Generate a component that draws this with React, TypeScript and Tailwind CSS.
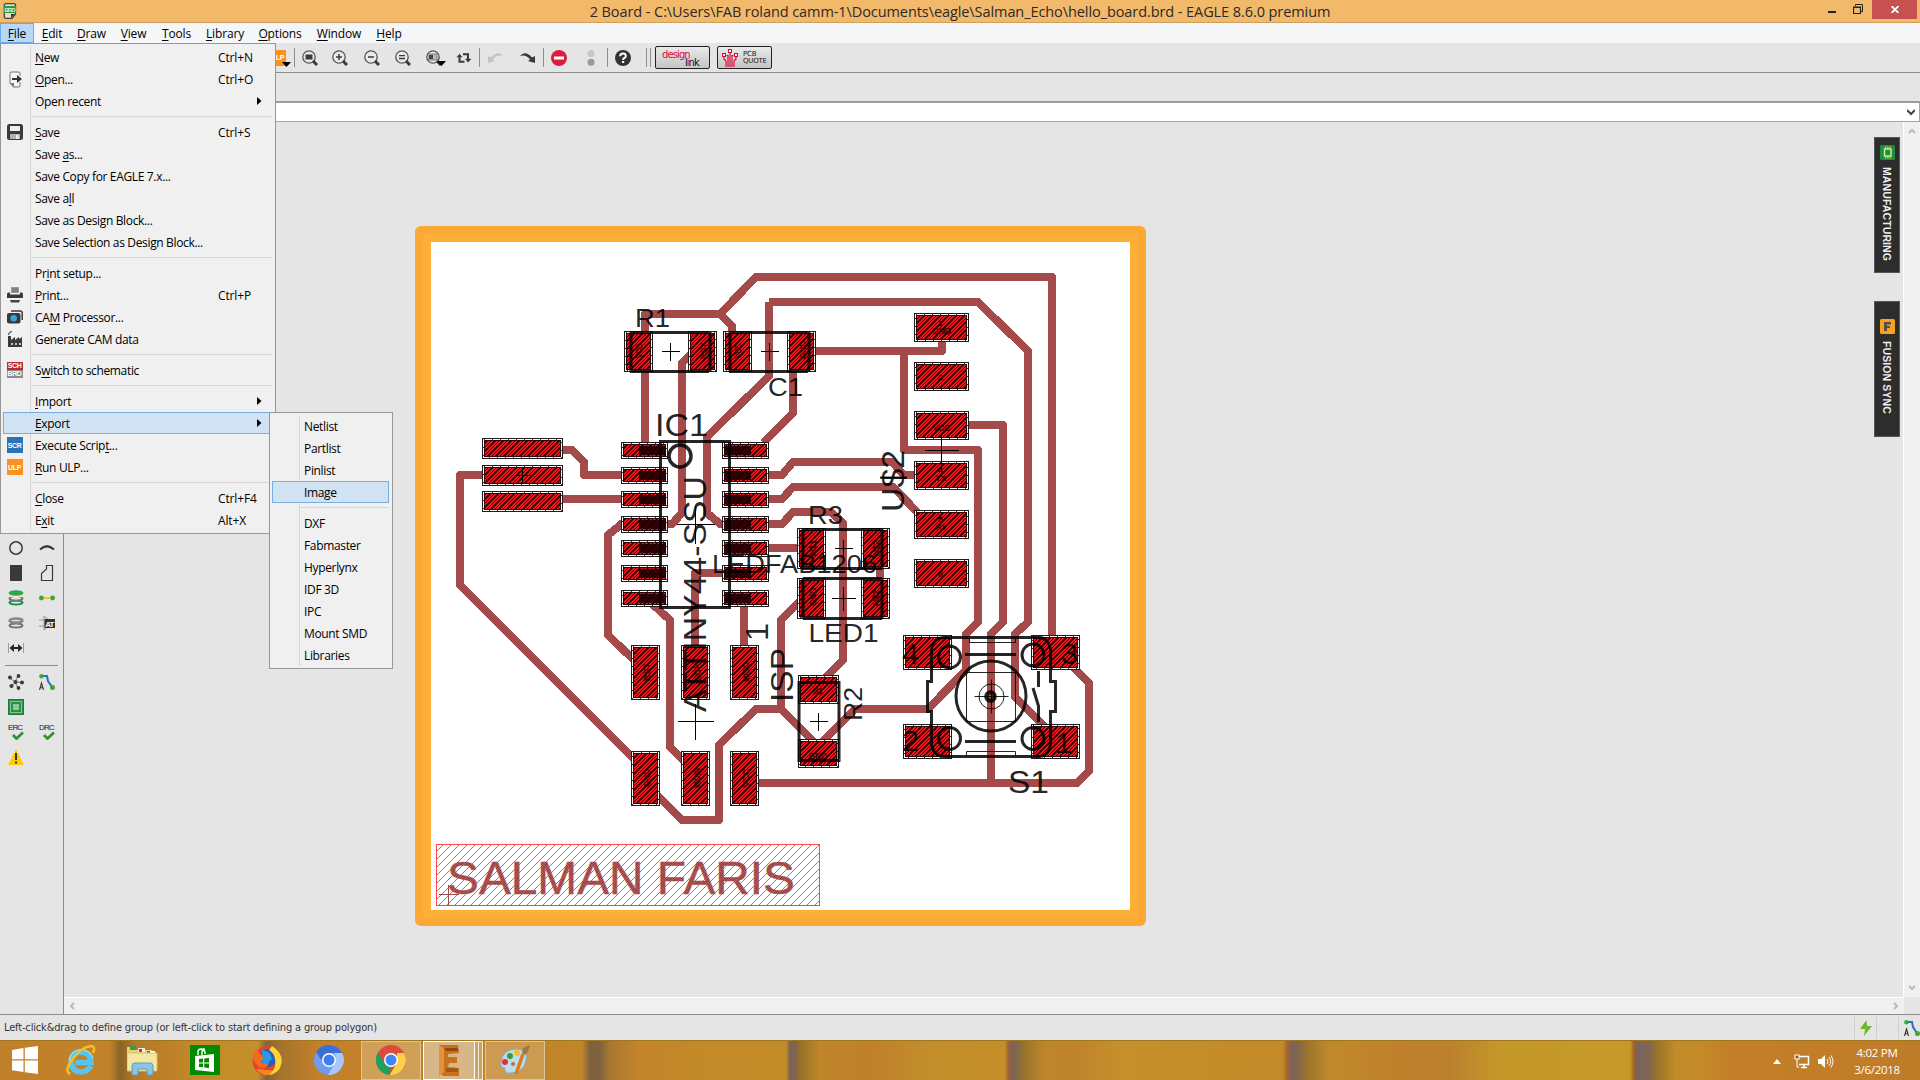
import React from 'react';

const UI = "font-['Open_Sans','Noto_Sans',sans-serif]";

type Entry = { label: string; u?: number; key?: string; sub?: boolean; icon?: React.ReactNode; hot?: boolean } | null;

function Label({ text, u }: { text: string; u?: number }) {
  if (u === undefined) return <span>{text}</span>;
  return (
    <span>
      {text.slice(0, u)}
      <span className="underline underline-offset-2">{text[u]}</span>
      {text.slice(u + 1)}
    </span>
  );
}

function Tag({ children, className }: { children: React.ReactNode; className: string }) {
  return (
    <span className={"flex h-4 w-4 items-center justify-center font-['Liberation_Sans',sans-serif] text-[7px] leading-none font-bold tracking-tighter " + className}>
      {children}
    </span>
  );
}

const openIcon = (
  <svg width="16" height="17" viewBox="0 0 16 17">
    <path d="M13 5V3Q13 1 11 1H5Q3 1 3 3V9L3 12L7 16H11Q13 16 13 14V11" fill="#f6f6f6" stroke="#999" strokeWidth="1.4" />
    <path d="M3 12H7V16Z" fill="#777" />
    <path d="M5 7H10V4L15 8L10 12V9H5Z" fill="#333" />
  </svg>
);
const saveIcon = (
  <svg width="16" height="16" viewBox="0 0 16 16">
    <rect width="16" height="16" rx="2.5" fill="#3a3a3a" />
    <rect x="3" y="2" width="10" height="5" fill="#f0f0f0" />
    <rect x="3" y="10" width="10" height="5" fill="#b0b0b0" />
    <rect x="9" y="11" width="2.5" height="4" fill="#f0f0f0" />
  </svg>
);
const printIcon = (
  <svg width="16" height="16" viewBox="0 0 16 16">
    <rect x="4" y="0" width="8" height="6" fill="#999" />
    <path d="M5 2H11M5 4H11" stroke="#666" />
    <path d="M0 7Q0 5.5 1.5 5.5H3V7.5H13V5.5H14.500Q16 5.500 16 7V11H0Z" fill="#3a3a3a" />
    <path d="M3 13H13L12 15.500H4Z" fill="#444" />
  </svg>
);
const camIcon = (
  <svg width="16" height="14" viewBox="0 0 16 14">
    <path d="M4 1H13Q15.200 1 15.200 3V10" fill="none" stroke="#3a3a3a" strokeWidth="1.5" />
    <rect x="0" y="3" width="13.500" height="10.500" rx="2" fill="#3a3a3a" />
    <circle cx="6.700" cy="8.200" r="3.300" fill="#35a3e4" />
  </svg>
);
const factoryIcon = (
  <svg width="16" height="16" viewBox="0 0 16 16">
    <path d="M1 16V5H4V9L8 6V9L12 6V8L15 6V16Z" fill="#3a3a3a" />
    <path d="M1.500 4Q2 1 5 .700" stroke="#666" strokeWidth="1.300" fill="none" />
    <path d="M4 13H6M8 13H10M12 13H14" stroke="#eee" strokeWidth="1.500" />
  </svg>
);
const schIcon = (
  <span className="flex h-4 w-4 flex-col font-['Liberation_Sans',sans-serif] text-[7px] leading-[8px] font-bold tracking-tighter text-white">
    <span className="h-2 bg-[#c1272d] text-center">SCH</span>
    <span className="h-2 bg-[#8c8c8c] text-center">BRD</span>
  </span>
);

const fileMenu: Entry[] = [
  { label: 'New', u: 0, key: 'Ctrl+N' },
  { label: 'Open...', u: 0, key: 'Ctrl+O', icon: openIcon },
  { label: 'Open recent', sub: true },
  null,
  { label: 'Save', u: 0, key: 'Ctrl+S', icon: saveIcon },
  { label: 'Save as...', u: 5 },
  { label: 'Save Copy for EAGLE 7.x...' },
  { label: 'Save all', u: 6 },
  { label: 'Save as Design Block...' },
  { label: 'Save Selection as Design Block...' },
  null,
  { label: 'Print setup...', u: 2 },
  { label: 'Print...', u: 0, key: 'Ctrl+P', icon: printIcon },
  { label: 'CAM Processor...', u: 2, icon: camIcon },
  { label: 'Generate CAM data', icon: factoryIcon },
  null,
  { label: 'Switch to schematic', u: 1, icon: schIcon },
  null,
  { label: 'Import', u: 0, sub: true },
  { label: 'Export', u: 0, sub: true, hot: true },
  { label: 'Execute Script...', u: 13, icon: <Tag className="bg-[#2a72bb] text-white">SCR</Tag> },
  { label: 'Run ULP...', u: 0, icon: <Tag className="bg-[#f7931e] text-white">ULP</Tag> },
  null,
  { label: 'Close', u: 0, key: 'Ctrl+F4' },
  { label: 'Exit', u: 1, key: 'Alt+X' },
];

const exportMenu: Entry[] = [
  { label: 'Netlist' }, { label: 'Partlist' }, { label: 'Pinlist' }, { label: 'Image', hot: true }, null,
  { label: 'DXF' }, { label: 'Fabmaster' }, { label: 'Hyperlynx' }, { label: 'IDF 3D' }, { label: 'IPC' },
  { label: 'Mount SMD' }, { label: 'Libraries' },
];

function Menu({ items, className }: { items: Entry[]; className: string }) {
  return (
    <div className={'absolute z-10 border border-[#979797] bg-[#f0f0f0] py-[2px] pr-[3px] pl-[2px] text-[12px] text-black ' + className}>
      <div className="absolute top-[2px] bottom-[2px] left-[29px] w-px bg-[#d7d7d7]" />
      {items.map((it, i) =>
        it === null ? (
          <div key={i} className="h-[9px] pt-1 pl-[27px]"><div className="h-px bg-[#d7d7d7]" /></div>
        ) : (
          <div key={i} className={'relative flex h-[22px] items-center border ' + (it.hot ? 'border-[#78aee5] bg-[#d1e2f2]' : 'border-transparent')}>
            <span className="flex w-[21px] shrink-0 justify-center">{it.icon}</span>
            <span className="ml-[10px] flex-1 pt-[2px] tracking-[-0.34px] whitespace-nowrap"><Label text={it.label} u={it.u} /></span>
            {it.key && <span className="w-[53px] pt-[2px] tracking-[-0.15px]">{it.key}</span>}
            {it.sub && (
              <svg className="mr-[9px]" width="5" height="8" viewBox="0 0 5 8"><path d="M0 0L4.500 4L0 8Z" fill="#000" /></svg>
            )}
          </div>
        ),
      )}
    </div>
  );
}

function Lens({ children }: { children: React.ReactNode }) {
  return (
    <svg width="16" height="16" viewBox="0 0 16 16">
      <circle cx="7" cy="7" r="6.200" fill="#e9e9e9" stroke="#555" strokeWidth="1.300" />
      <path d="M11 11L15 15" stroke="#3a3a3a" strokeWidth="3" />
      {children}
    </svg>
  );
}

const Cell = ({ children, className = 'w-[31px]' }: { children: React.ReactNode; className?: string }) => (
  <span className={'relative flex h-[29px] shrink-0 items-center justify-center ' + className}>{children}</span>
);
const Caret = () => (
  <svg className="absolute top-[18px] left-[19px]" width="9" height="5" viewBox="0 0 9 5"><path d="M0 0H9L4.500 5Z" fill="#000" /></svg>
);
const Sep = ({ className = '' }: { className?: string }) => <span className={'h-[19px] w-px shrink-0 bg-[#8e8e8e] ' + className} />;

function Toolbar() {
  return (
    <div className="flex h-[30px] items-center border-b border-[#8c8c8c] bg-[#e5e5e5]">
      <Cell className="ml-[262px] w-[31px]">
        <Tag className="bg-[#f7931e] text-white">ULP</Tag>
        <svg className="absolute top-[19px] left-[20px]" width="9" height="5" viewBox="0 0 9 5"><path d="M0 0H9L4.500 5Z" fill="#000" /></svg>
      </Cell>
      <Sep className="ml-px" />
      <Cell className="w-[29px]"><Lens><rect x="3.500" y="4.500" width="7" height="5" fill="#3a3a3a" /></Lens></Cell>
      <Cell className="w-[32px]"><Lens><path d="M4 7H10M7 4V10" stroke="#3a3a3a" strokeWidth="1.500" /></Lens></Cell>
      <Cell><Lens><path d="M4 7H10" stroke="#3a3a3a" strokeWidth="1.500" /></Lens></Cell>
      <Cell><Lens><path d="M4 5.700H10M4 8.500H10" stroke="#3a3a3a" strokeWidth="1.300" /></Lens></Cell>
      <Cell><Lens><rect x="3" y="4" width="8" height="6" fill="#bbb" stroke="#777" /><rect x="3" y="5" width="4" height="4" fill="#444" /></Lens><Caret /></Cell>
      <Cell className="w-[30px]">
        <svg width="16" height="14" viewBox="0 0 16 14">
          <path d="M3.500 5V10.800H8.500M12 8.500V3.200H7" fill="none" stroke="#3a3a3a" strokeWidth="2" />
          <path d="M.500 6.200L3.500 2.700L6.500 6.200ZM9 7.800L12 11.500L15.500 7.800Z" fill="#3a3a3a" />
        </svg>
      </Cell>
      <Sep />
      <Cell>
        <svg width="16" height="11" viewBox="0 0 16 11"><path d="M0 4L0 11L7 9L5 7.500Q9 2 15 4Q10 -2 3 5.500Z" fill="#c4c4c4" /></svg>
      </Cell>
      <Cell className="w-[32px]">
        <svg width="16" height="11" viewBox="0 0 16 11"><path d="M16 4L16 11L9 9L11 7.500Q7 2 1 4Q6 -2 13 5.500Z" fill="#3a3a3a" /></svg>
      </Cell>
      <Sep />
      <Cell className="w-[30px]">
        <svg width="16" height="16" viewBox="0 0 16 16"><circle cx="8" cy="8" r="8" fill="#dc1e3c" /><rect x="3" y="6.500" width="10" height="3" fill="#fff" /></svg>
      </Cell>
      <Cell className="w-[33px]">
        <svg width="8" height="16" viewBox="0 0 8 16"><circle cx="4" cy="3.500" r="3.500" fill="#c6c6c6" /><circle cx="4" cy="12.300" r="3.500" fill="#9a9a9a" /></svg>
      </Cell>
      <Sep className="w-[2px]" />
      <Cell className="w-[30px]">
        <svg width="16" height="16" viewBox="0 0 16 16">
          <circle cx="8" cy="8" r="8" fill="#333" />
          <path d="M5.200 6.200Q5.200 3.600 8 3.600T10.800 6Q10.800 7.400 9.300 8Q8.100 8.600 8.100 9.900" fill="none" stroke="#fff" strokeWidth="2" />
          <rect x="7" y="11" width="2.200" height="2" fill="#fff" />
        </svg>
      </Cell>
      <Sep className="ml-2" />
      <Sep className="ml-[3px]" />
      <span className="relative ml-1 h-[23px] w-[55px] rounded-[2px] border border-[#222] bg-linear-to-b from-[#e9e9e9] to-[#c6c6c6] font-['DejaVu_Sans',sans-serif] text-[10px] leading-none">
        <span className="absolute top-[3px] left-[6px] tracking-[-0.9px] text-[#dc0a3c]">design</span>
        <span className="absolute top-[11px] left-[29px] tracking-[-1px] text-[#111]"><span>l</span><span className="text-[#dc0a3c]">i</span>nk</span>
      </span>
      <span className="ml-[7px] flex h-[23px] w-[55px] items-center rounded-[2px] border border-[#222] bg-linear-to-b from-[#e9e9e9] to-[#c6c6c6]">
        <svg className="ml-[3px] shrink-0" width="18" height="19" viewBox="0 0 18 19" fill="none" stroke="#dc0a3c">
          <rect x="7.500" y="1.500" width="3" height="3" fill="#fff" /><rect x="1.500" y="5.500" width="3" height="3" fill="#fff" /><rect x="13.500" y="5.500" width="3" height="3" fill="#fff" />
          <path d="M9 4V19M3 8.500V11L5 13V19M15 8.500V11L13 13V19M7 19V7.500H5.500M11 19V7.500H12.500" strokeWidth="1.200" />
        </svg>
        <span className="ml-[4px] font-['DejaVu_Sans',sans-serif] text-[7px] leading-[7px] tracking-[-0.2px] text-[#222]">PCB<br />QUOTE</span>
      </span>
    </div>
  );
}

const traces = [
  'M645 450V314H720L756 277H1052V645', 'M720 314L732 326V345',
  'M769 302H978L1028 351V622L1015 634V697L1048 730', 'M769 302V376L707 437V513L720 524H735',
  'M692 353L682 363V513L672 524H660', 'M793 370V413L763 443',
  'M810 351H942V335', 'M904 351V450H978V622L966 634V670L928 709H855L819 745',
  'M965 425H1003V622L991 634V783', 'M560 450H572L584 462V475H625',
  'M485 475H460V585L638 763', 'M560 499H625',
  'M765 475H782L793 462H892L904 475H920', 'M765 499H782L793 487H893L920 515',
  'M765 524H782L793 512H831L843 523V660L823 680', 'M765 548H800', 'M745 573H695V650',
  'M880 560V585', 'M624 522L608 535V635L636 662', 'M650 602L670 620V747L686 763', 'M744 605V648',
  'M799 602L781 620V709L817 745', 'M781 709H756L719 745V820H682L655 793',
  'M757 783H1077L1089 771V683L1070 664',
];

type Rect = [number, number, number, number];
const pads: Rect[] = [
  [482, 438, 81, 21], [482, 465, 81, 21], [482, 491, 81, 21],
  [624, 331, 29, 41], [688, 331, 29, 41], [723, 331, 29, 41], [787, 331, 29, 41],
  ...[442, 467, 491, 516, 540, 565, 590].flatMap((y): Rect[] => [[621, y, 47, 17], [722, y, 47, 17]]),
  ...[313, 362, 411, 461, 510, 559].map((y): Rect => [914, y, 55, 29]),
  [797, 528, 29, 41], [861, 528, 29, 41], [797, 578, 29, 41], [861, 578, 29, 41],
  ...[645, 751].flatMap((y): Rect[] => [[631, y, 29, 55], [681, y, 29, 55], [730, y, 29, 55]]),
  [798, 675, 41, 29], [798, 739, 41, 29],
  [903, 635, 49, 35], [903, 724, 49, 35], [1031, 635, 49, 35], [1031, 724, 49, 35],
];

type Txt = { t: string; x: number; y: number; s: number; w: number; v?: boolean };
const names: Txt[] = [
  { t: 'R1', x: 635, y: 326.5, s: 26, w: 35 }, { t: 'C1', x: 768, y: 395.5, s: 26, w: 35 },
  { t: 'IC1', x: 655, y: 436, s: 32, w: 53 }, { t: 'R3', x: 808, y: 523.5, s: 26, w: 35 },
  { t: 'LEDFAB1206', x: 712, y: 573, s: 26, w: 165 }, { t: 'LED1', x: 808.5, y: 641.5, s: 26, w: 70 },
  { t: 'S1', x: 1008, y: 793, s: 32, w: 41 }, { t: 'U$2', x: 904, y: 512, s: 32, w: 62, v: true },
  { t: 'R2', x: 862, y: 721, s: 26, w: 34, v: true }, { t: 'ISP', x: 793, y: 702, s: 32, w: 54, v: true },
  { t: '1', x: 768, y: 641, s: 32, w: 18, v: true }, { t: 'ATTINY44-SSU', x: 706, y: 712, s: 32, w: 236, v: true },
  { t: '4', x: 902, y: 664, s: 29, w: 17 }, { t: '3', x: 1061, y: 664, s: 29, w: 17 },
  { t: '2', x: 902, y: 751, s: 29, w: 17 }, { t: '1', x: 1055, y: 753, s: 29, w: 17 },
];
const signals: Txt[] = [
  { t: '1', x: 938, y: 326, s: 8, w: 5 }, { t: 'GND', x: 932, y: 334, s: 9, w: 19 }, { t: '2', x: 938, y: 380, s: 8, w: 5 },
  { t: 'VCC', x: 933, y: 431, s: 9, w: 17 }, { t: '4', x: 938, y: 473, s: 8, w: 5 }, { t: 'TX', x: 936, y: 481, s: 8, w: 10 },
  { t: '5', x: 938, y: 522, s: 8, w: 5 }, { t: 'RX', x: 936, y: 530, s: 8, w: 10 }, { t: '6', x: 938, y: 577, s: 9, w: 5 },
  { t: 'RST', x: 650, y: 681, s: 9, w: 18, v: true }, { t: 'SCK', x: 700, y: 681, s: 9, w: 18, v: true }, { t: 'MISO', x: 749, y: 682, s: 9, w: 20, v: true },
  { t: 'GND', x: 650, y: 787, s: 9, w: 18, v: true }, { t: 'MOSI', x: 700, y: 788, s: 9, w: 20, v: true }, { t: 'VCC', x: 749, y: 787, s: 9, w: 18, v: true },
  { t: 'VCC', x: 642, y: 358, s: 9, w: 14, v: true }, { t: 'RST', x: 707, y: 359, s: 9, w: 16, v: true }, { t: 'VCC', x: 741, y: 358, s: 9, w: 14, v: true },
  { t: 'GND', x: 806, y: 359, s: 9, w: 18, v: true }, { t: 'N$1', x: 816, y: 556, s: 9, w: 16, v: true }, { t: 'N$2', x: 879, y: 556, s: 9, w: 16, v: true },
  { t: 'GND', x: 816, y: 606, s: 9, w: 18, v: true }, { t: 'N$2', x: 879, y: 606, s: 9, w: 16, v: true }, { t: 'B1', x: 813, y: 694, s: 9, w: 10 }, { t: 'GND', x: 809, y: 759, s: 9, w: 18 },
];

function BoardText({ t, x, y, s, w, v }: Txt) {
  return (
    <text x={x} y={y} fontSize={s} textLength={w} lengthAdjust="spacingAndGlyphs" transform={v ? `rotate(-90 ${x} ${y})` : undefined}>{t}</text>
  );
}

const plus = (x: number, y: number, r: number, q = r) => `M${x - r} ${y}H${x + r}M${x} ${y - q}V${y + q}`;

function Board() {
  return (
    <svg className="block font-['Liberation_Sans',sans-serif]" width="732" height="701" viewBox="415 226 732 701">
      <defs>
        <pattern id="hatch" width="8" height="8" patternUnits="userSpaceOnUse">
          <rect width="8" height="8" fill="#f3171b" />
          <g stroke="#2c0408" shapeRendering="geometricPrecision">
            <path d="M-1 5L5 -1M3 9L9 3" strokeWidth="1" />
            <path d="M-1 9L9 -1M-1 1L1 -1M7 9L9 7" strokeWidth="1.800" />
          </g>
        </pattern>
        <pattern id="keepout" width="8" height="8" patternUnits="userSpaceOnUse">
          <path d="M-1 9L9 -1M-1 1L1 -1M7 9L9 7" stroke="#ff3a3e" strokeWidth=".9" shapeRendering="geometricPrecision" />
        </pattern>
      </defs>
      <rect x="415" y="226" width="731" height="700" rx="6" fill="#fba834" />
      <rect x="423" y="234" width="715" height="684" fill="#ffae38" />
      <rect x="431" y="242" width="699" height="668" fill="#fff" />

      <g fill="none" stroke="#a54a4a" strokeWidth="8" strokeLinejoin="round" shapeRendering="crispEdges">
        {traces.map((d) => <path key={d} d={d} />)}
      </g>

      <g shapeRendering="crispEdges">
        {pads.map(([x, y, w, h], i) => (
          <g key={i}>
            <rect x={x + 0.5} y={y + 0.5} width={w - 1} height={h - 1} fill="#fff" stroke="#1c1c1c" />
            <rect x={x + 1.500} y={y + 1.500} width={w - 3} height={h - 3} fill="none" stroke="#333" strokeDasharray="1 7" />
            <rect x={x + 2} y={y + 2} width={w - 4} height={h - 4} fill="#2c0408" />
            <rect x={x + 3} y={y + 3} width={w - 6} height={h - 6} fill="url(#hatch)" />
          </g>
        ))}
        {[442, 467, 491, 516, 540, 565, 590].map((y) => (
          <g key={y} fill="#1a0003" fillOpacity=".88">
            <rect x="639" y={y + 4} width="27" height="9" /><rect x="725" y={y + 4} width="26" height="9" />
          </g>
        ))}
      </g>

      <g fill="none" stroke="#000" strokeOpacity=".85" strokeWidth="3">
        <path d="M630 332.500H709M630 371.500H709M631 332V372M710 332V372M729 332.500H808M729 371.500H808M730 332V372M809 332V372" />
        <path d="M660.500 441.500H729.500V607.500H660.500Z" />
        <circle cx="680" cy="456" r="11" strokeWidth="3.500" />
        <path d="M803 529.500H882M803 568.500H882M803 529V569M882 529V569M803 578.500H882M803 618.500H882M803 578V619M882 578V619" />
        <path d="M799 682.500H839V760.500H799Z" />
      </g>

      <g fill="none" stroke="#000" strokeOpacity=".85" strokeWidth="3">
        <path d="M943 637.500H1040M943 756.500H1040M931.500 649Q934 638 943 637.500M1050.500 649Q1048 638 1040 637.500M931.500 745Q934 756 943 756.500M1050.500 745Q1048 756 1040 756.500M931.500 649V681.500H927.500V711.500H931.500V745M1050.500 649V681.500H1055.500V711.500H1050.500V745" />
        <path d="M965 654.500H1016M965 741.500H1016M1038.500 671V687M1033 688L1038.500 706V722" />
        <circle cx="991" cy="696" r="35" />
        <circle cx="949.500" cy="657" r="11" /><circle cx="949.500" cy="738.500" r="11" />
        <circle cx="1033" cy="655" r="11" /><circle cx="1033" cy="738.500" r="11" />
        <circle cx="990.500" cy="696.500" r="4.300" strokeWidth="4" />
        <g strokeWidth="1">
          <rect x="966.500" y="672.500" width="49" height="49" /><path d="M969.500 638V642.500H1015.500V638M966.500 756V751.500H1015.500V756" />
          <circle cx="991.500" cy="696.500" r="12.500" /><path d={plus(991.500, 696.500, 17)} />
        </g>
      </g>

      <path d={[plus(670.5, 351.5, 9), plus(769.5, 351.5, 9), plus(522.5, 475.5, 8), plus(695.5, 524.5, 19), plus(941.5, 450.5, 17), plus(843.5, 548.5, 9), plus(843.5, 598.5, 12), plus(695.5, 721.5, 18), plus(818.5, 721.5, 9)].join('')} stroke="#000" fill="none" shapeRendering="crispEdges" />

      <g fill="#000" fillOpacity=".87">{names.map((n, i) => <BoardText key={i} {...n} />)}</g>
      <path d="M880 477.500H907" stroke="#000" strokeOpacity=".85" strokeWidth="2" />
      <g fill="#300" fillOpacity=".9" stroke="#300" strokeWidth=".4">{signals.map((n, i) => <BoardText key={i} {...n} />)}</g>

      <g fill="#a54a4a" stroke="#a54a4a" strokeWidth=".5"><BoardText t="SALMAN FARIS" x={447} y={894} s={47} w={348} /></g>
      <rect x="436.500" y="844.500" width="383" height="61" fill="url(#keepout)" stroke="#ff4548" shapeRendering="crispEdges" />
      <path d={plus(448.5, 894.5, 10)} stroke="#a54a4a" shapeRendering="crispEdges" />
    </svg>
  );
}

const autoRoute = (
  <svg width="16" height="16" viewBox="0 0 16 16">
    <path d="M3 2H8L9 7L13 13" fill="none" stroke="#2a72bb" strokeWidth="2" />
    <circle cx="2.500" cy="2.300" r="2.300" fill="#3aaa35" /><circle cx="13.500" cy="13.500" r="2.500" fill="#3aaa35" />
    <path d="M.500 16L2.500 9L4.500 16M1 13.800H4" fill="none" stroke="#333" strokeWidth="1.100" />
  </svg>
);
function Rule({ label }: { label: string }) {
  return (
    <span className="flex h-4 w-4 flex-col font-['Liberation_Sans',sans-serif] text-[8px] leading-[7px] tracking-[-0.9px] text-[#222]">
      {label}
      <svg className="ml-[4px]" width="12" height="9" viewBox="0 0 12 9"><path d="M1 4L4.500 7.500L11 1.500" fill="none" stroke="#2f9336" strokeWidth="2.800" /></svg>
    </span>
  );
}
const disc = (cy: number, c: string) => <ellipse cx="8" cy={cy} rx="6.500" ry="2" fill="#e5e5e5" stroke={c} strokeWidth="2" />;

const tools: React.ReactNode[] = [
  <svg key="c" width="16" height="16" viewBox="0 0 16 16"><circle cx="8" cy="8" r="6.200" fill="none" stroke="#3a3a3a" strokeWidth="1.500" /></svg>,
  <svg key="a" width="16" height="16" viewBox="0 0 16 16"><path d="M1 9.500Q8 3 15 9.500" fill="none" stroke="#3a3a3a" strokeWidth="2.200" /></svg>,
  <svg key="r" width="16" height="16" viewBox="0 0 16 16"><rect x="2" width="12" height="16" fill="#3a3a3a" /></svg>,
  <svg key="p" width="16" height="16" viewBox="0 0 16 16"><path d="M2.500 15.500H13.500V.500H7.500V4L2.500 8.500Z" fill="none" stroke="#3a3a3a" strokeWidth="1.200" /></svg>,
  <svg key="v" width="16" height="16" viewBox="0 0 16 16">{disc(12.500, '#119a45')}{disc(8.500, '#777')}<ellipse cx="8" cy="5.500" rx="7.500" ry="2.400" fill="#e5e5e5" /><ellipse cx="8" cy="3" rx="7.500" ry="2.800" fill="#2fa83d" /></svg>,
  <svg key="s" width="16" height="16" viewBox="0 0 16 16"><path d="M3 8H13" stroke="#f7c600" strokeWidth="1.800" /><circle cx="2.400" cy="8" r="2.400" fill="#3aaa35" /><circle cx="13.600" cy="8" r="2.400" fill="#3aaa35" /></svg>,
  <svg key="h" width="16" height="16" viewBox="0 0 16 16">{disc(10.500, '#777')}<ellipse cx="8" cy="5.500" rx="6.500" ry="2" fill="#e5e5e5" stroke="#888" strokeWidth="2.400" /></svg>,
  <svg key="t" width="16" height="16" viewBox="0 0 16 16"><path d="M0 5H6M0 11H6M5 1V15Q10 12 11 8Q10 4 5 1" fill="none" stroke="#999" /><rect x="5.500" y="4" width="10.500" height="9" fill="#333" /><text x="6.300" y="11.500" fontSize="8" fontWeight="bold" fill="#fff" fontFamily="Liberation Sans" textLength="9">AT</text></svg>,
  <svg key="d" width="16" height="16" viewBox="0 0 16 16"><path d="M.500 3V13M15.500 3V13" stroke="#999" /><path d="M3 8H13" stroke="#222" strokeWidth="2" /><path d="M1.500 8L6 4V12ZM14.500 8L10 4V12Z" fill="#222" /></svg>,
  null,
];
const tools2: React.ReactNode[] = [
  <svg key="n" width="16" height="16" viewBox="0 0 16 16" fill="#3a3a3a"><path d="M7 8L2 4M7 8L10 2M7 8L14 8.500M7 8L4 12M7 8L10 14" stroke="#777" /><circle cx="7.500" cy="8" r="2" /><circle cx="2" cy="3.500" r="2" /><circle cx="10.500" cy="2" r="1.900" /><circle cx="14" cy="8.500" r="2" /><circle cx="3.500" cy="12" r="2" /><circle cx="10.500" cy="14" r="1.900" /></svg>,
  <React.Fragment key="ar">{autoRoute}</React.Fragment>,
  <svg key="b" width="16" height="16" viewBox="0 0 16 16"><rect x=".500" y=".500" width="15" height="15" fill="#2c9048" stroke="#1f7d3a" /><rect x="2.500" y="2.500" width="11" height="11" fill="none" stroke="#e5f0e5" strokeDasharray="1 1" /><rect x="5" y="5" width="6" height="6" fill="#8cc89a" /></svg>,
  null,
  <Rule key="e" label="ERC" />,
  <Rule key="dr" label="DRC" />,
  <svg key="w" width="16" height="16" viewBox="0 0 16 16"><path d="M8 0L16 16H0Z" fill="#fc0" /><path d="M8 4V11M8 12.500V14.500" stroke="#333" strokeWidth="2" /></svg>,
  null,
];

const Chev = ({ d, className = '', c = '#b9b9b9' }: { d: string; className?: string; c?: string }) => (
  <svg className={className} width="8" height="8" viewBox="0 0 8 8"><path d={d} fill="none" stroke={c} strokeWidth="2" /></svg>
);

function SideTab({ text, badge, className }: { text: string; badge: React.ReactNode; className: string }) {
  return (
    <div className={'flex h-[136px] w-[26px] flex-col items-center border border-[#555] bg-[#2d2d2d] ' + className}>
      {badge}
      <span className="mt-[7px] font-['Liberation_Sans',sans-serif] text-[10.5px] leading-[14px] font-bold tracking-[0.1px] whitespace-nowrap text-[#eee] [writing-mode:vertical-rl]">{text}</span>
    </div>
  );
}

function Taskbar() {
  return (
    <div
      className={
        'relative flex h-10 items-center overflow-hidden border-t border-[#a0761e] pb-px bg-[linear-gradient(90deg,#c0802a_0,#c0822a_110px,#8a6428_120px,#b5782a_135px,#c58a28_200px,#c4902a_258px,#84633a_266px,#a3742c_280px,#c4802a_320px,#c08628_582px,#7c6040_590px,#80633e_600px,#a87830_610px,#c4842a_640px,#c28a28_700px,#c28c28_786px,#7c6258_790px,#80644c_795px,#9a7428_802px,#c0862a_820px,#c0802c_870px,#c28e2a_930px,#c48e28_1005px,#a8642c_1008px,#7c6258_1011px,#80664e_1016px,#98742c_1024px,#be862a_1045px,#c0842c_1080px,#c5902a_1120px,#c28a28_1283px,#a8642c_1287px,#7c6258_1291px,#80664e_1297px,#9c742c_1308px,#c08a2a_1330px,#c0802c_1400px,#bb802e_1450px,#c49828_1500px,#c79a28_1630px,#a06028_1634px,#776464_1638px,#84684c_1650px,#9a7428_1658px,#c08c28_1675px,#c48a28_1700px,#c47e28_1730px,#bf7c28_1920px)]'
      }
    >
      <svg className="ml-3" width="26" height="28" viewBox="0 0 26 28" fill="#fff"><path d="M0 4L11.500 2V13.300H0ZM12.800 1.800L26 0V13.300H12.800ZM0 14.600H11.500V26L0 24.200ZM12.800 14.600H26V28L12.800 26.200Z" /></svg>
      <svg className="ml-7" width="30" height="32" viewBox="0 0 30 32">
        <path d="M25 22Q21 28 15 28Q5 27 5 17Q6 8 15 8Q25 9 25 18.500H9" fill="none" stroke="#57c4ef" strokeWidth="5.500" />
        <path d="M3 17Q5 6 15 5.500Q24 6 27 14" fill="none" stroke="#a6e2f8" strokeWidth="1.200" />
        <path d="M4 30Q-2 27 6 16Q15 3 25 2Q30 2 27 9" fill="none" stroke="#f4c020" strokeWidth="2.500" />
      </svg>
      <svg className="ml-[31px]" width="31" height="32" viewBox="0 0 31 32">
        <path d="M0 3H7L9 6H24L30 9V27H0Z" fill="#e9d27c" /><path d="M3 2H9V6H3Z" fill="#3a9c3a" /><path d="M11 4H18V8H11Z" fill="#eee" /><path d="M12 5H15V8H12Z" fill="#c33" /><path d="M21 7H28V9H21Z" fill="#fff" /><path d="M20 7H23V9H20Z" fill="#37c" />
        <rect x="0" y="9" width="30" height="18" rx="1" fill="#f5e7a3" stroke="#dcc067" />
        <path d="M5 31V22Q5 19 8 19H23Q26 19 26 22V31H20V25H11V31Z" fill="#8dc4e4" stroke="#5b9cc4" />
      </svg>
      <svg className="ml-8" width="30" height="30" viewBox="0 0 30 30">
        <rect width="30" height="30" fill="#008a00" /><path d="M8 10V7Q8 4 11 4T15 7V9M12 10V7Q12 4 15 4" fill="none" stroke="#fff" strokeWidth="1.400" />
        <path d="M5 11L24 9V27L5 25Z" fill="#fff" /><path d="M9 14L13 13.600V17.400H9ZM14.200 13.400L19 13V17.400H14.200ZM9 18.600H13V22.300L9 22ZM14.200 18.600H19V23L14.200 22.500Z" fill="#008a00" />
      </svg>
      <svg className="ml-8" width="30" height="31" viewBox="0 0 30 31">
        <circle cx="15" cy="16" r="14.500" fill="#e8432a" /><path d="M4 24Q14 36 26 24Q22 26 15 25Z" fill="#f08a1c" />
        <circle cx="16" cy="13" r="9" fill="#1f5fc0" /><path d="M10 5Q19 6 20 14L14 20Q8 17 10 12Z" fill="#2f96e0" />
        <path d="M20 1Q31 8 29.500 18Q28 28 17 30Q25 24 23 14Q22 8 17 5Z" fill="#ffd23a" />
        <path d="M1 9L4 5L8 8L11 12L9 17Q12 20 17 18Q14 25 7 22Q1 18 1 9Z" fill="#f7691e" />
      </svg>
      <svg className="ml-8" width="30" height="30" viewBox="0 0 30 30">
        <circle cx="15" cy="15" r="15" fill="#6f9cf0" /><path d="M2 7A15 15 0 0 1 28 8H15Q9 8 8 16Z" fill="#3b6fd6" /><path d="M28 8A15 15 0 0 1 14 30L21 18Q23 12 20 8Z" fill="#a9c8fa" />
        <circle cx="15" cy="15" r="7" fill="#fff" /><circle cx="15" cy="15" r="5.500" fill="#3f7ef0" />
      </svg>
      <div className="ml-[17px] flex h-[39px] w-[60px] items-center justify-center border border-[#dcc49a] bg-[#d5ac6c]/70">
        <svg width="30" height="30" viewBox="0 0 30 30">
          <circle cx="15" cy="15" r="15" fill="#dd4b3e" /><path d="M2 7.500L9 19L15 22L13.500 30A15 15 0 0 1 2 7.500Z" fill="#1fa15d" /><path d="M28 8A15 15 0 0 1 13.500 30L21 18V8Z" fill="#fdd04b" />
          <circle cx="15" cy="15" r="7" fill="#fff" /><circle cx="15" cy="15" r="5.500" fill="#4285f4" />
        </svg>
      </div>
      <div className="ml-[2px] flex h-[39px] w-[60px]">
        <div className="flex w-[52px] items-center justify-center border border-[#fff] bg-[#dcc3a0]/80">
          <svg width="22" height="31" viewBox="0 0 22 31"><path d="M1 0H20L21 8L10 9V12H19V18H11L10 22L21 23V31H5L1 27L3 17Z" fill="#c9701c" /><path d="M1 0L6 3V27L1 31Z" fill="#e3923a" /><path d="M6 3H20V6H8Z" fill="#8e4a10" /><path d="M8 23H20V27H8Z" fill="#a65812" /></svg>
        </div>
        <div className="w-1 border border-l-0 border-[#f4e8d4] bg-[#cba566]" />
        <div className="w-1 border border-l-0 border-[#f4e8d4] bg-[#cba566]" />
      </div>
      <div className="ml-[2px] flex h-[39px] w-[60px] items-center justify-center border border-[#dcc49a] bg-[#d0a462]/70">
        <svg width="32" height="32" viewBox="0 0 32 32">
          <path d="M2 18Q4 5 18 5Q30 6 27 16Q25 28 12 29Q5 30 6 24Q1 24 2 18Z" fill="#bcdcee" stroke="#7fb0ce" />
          <circle cx="6" cy="18" r="3" fill="#d33" /><circle cx="11" cy="12" r="3" fill="#3a9c3a" /><circle cx="18" cy="9" r="3" fill="#f4c020" /><circle cx="14" cy="20" r="2" fill="#b07a30" />
          <path d="M17 30L24 10" stroke="#e07a1c" strokeWidth="3.500" /><path d="M23 9L24 4L31 1L29 8L26 11Z" fill="#a8763c" />
        </svg>
      </div>
      <div className="mr-[19px] ml-auto flex items-center pt-[2px] text-white">
        <svg className="mr-3" width="8" height="5" viewBox="0 0 8 5"><path d="M0 5L4 0L8 5Z" fill="#fff" /></svg>
        <svg className="mr-2 ml-px" width="16" height="15" viewBox="0 0 16 15"><path d="M5 2.500H14.500V10.500H5M7 13.500H13M10 11V13" fill="none" stroke="#fff" strokeWidth="1.500" /><rect x="1" y="1" width="4" height="4" fill="#8a6030" stroke="#fff" /><path d="M3 5V13H5" stroke="#fff" fill="none" /></svg>
        <svg className="mr-[19px]" width="16" height="15" viewBox="0 0 16 15"><path d="M0 5H3L7 1V14L3 10H0Z" fill="#fff" /><path d="M9 5Q11 7.500 9 10M11 3Q14.500 7.500 11 12M13 1.500Q17 7.500 13 13.500" fill="none" stroke="#fff" strokeWidth="1" /></svg>
        <div className="w-[48px] text-center text-[11.5px] leading-[17px] tracking-[-0.3px] whitespace-nowrap"><div>4:02 PM</div><div>3/6/2018</div></div>
      </div>
    </div>
  );
}

const menus: [string, string][] = [
  ['Edit', 'w-[36px]'], ['Draw', 'w-[43px]'], ['View', 'w-[41px]'], ['Tools', 'w-[45px]'], ['Library', 'w-[52px]'], ['Options', 'w-[58px]'], ['Window', 'w-[60px]'], ['Help', 'w-[40px]'],
];

export default function App() {
  return (
    <div className={'relative flex h-[1080px] w-[1920px] flex-col overflow-hidden bg-[#e5e5e5] text-[12px] text-black ' + UI}>
      <header className="relative flex h-[23px] items-center justify-center border-b border-[#cf9f5f] bg-[#f3b96b]">
        <svg className="absolute top-[3px] left-[3px]" width="14" height="16" viewBox="0 0 14 16">
          <path d="M3 .700H11Q12.500 .700 12.500 2V11L9 15.300H3Q1.300 15.300 1.300 13.500V2.500Q1.300 .700 3 .700Z" fill="#e9dcc0" stroke="#444" strokeWidth="1.300" />
          <path d="M8 15V11H12Z" fill="#333" /><rect x="1" y="3" width="12" height="7" fill="#2c9a3c" />
          <text x="1.500" y="8.700" fontSize="6" fontWeight="bold" fill="#dff0df" fontFamily="Liberation Sans" textLength="11">BRD</text>
        </svg>
        <span className="pt-px text-[14.5px] leading-[22px] tracking-[-0.08px] text-[#2a2a2a]">2 Board - C:\Users\FAB roland camm-1\Documents\eagle\Salman_Echo\hello_board.brd - EAGLE 8.6.0 premium</span>
        <div className="absolute top-0 right-[3px] flex h-[22px] items-start">
          <span className="mt-[11px] mr-[17px] h-[2px] w-2 bg-[#222]" />
          <svg className="mt-[4px] mr-[9px]" width="10" height="10" viewBox="0 0 10 10" fill="none" stroke="#222"><path d="M2.500 2V.500H9.500V7.500H8" /><path d="M.500 3H7.500V9.500H.500ZM.500 3.500H7.500" strokeWidth="1.200" /></svg>
          <span className="flex h-[19px] w-[45px] items-center justify-center bg-[#c75050]">
            <svg width="8" height="7" viewBox="0 0 8 7"><path d="M.500 0L7.500 7M7.500 0L.500 7" stroke="#fff" strokeWidth="1.800" /></svg>
          </span>
        </div>
      </header>

      <nav className="flex h-[20px] items-center bg-[#f5f6f8] tracking-[-0.15px]">
        <span className="flex h-[20px] w-[34px] items-center justify-center border border-[#6aabe8] bg-[#b8d8f8] pt-[2px]"><Label text="File" u={0} /></span>
        {menus.map(([m, w]) => <span key={m} className={'flex justify-center pt-[2px] ' + w}><Label text={m} u={0} /></span>)}
      </nav>

      <Toolbar />
      <div className="h-[30px] border-b-2 border-[#9a9aa0] bg-[#e5e5e5]" />
      <div className="flex h-[19px] items-center justify-end border-r border-b border-[#a5a5a5] bg-white pr-1">
        <Chev d="M0 2L4 6L8 2" c="#444" />
      </div>

      <div className="flex h-[893px] border-b border-[#8c8c8c]">
        <aside className="h-full w-[64px] shrink-0 border-r border-[#8c8c8c] pt-[413px]">
          <div className="grid h-[125px] grid-cols-[32px_30px] items-center justify-items-center">{tools.map((t, i) => <span key={i} className="h-4 w-4">{t}</span>)}</div>
          <div className="mx-[5px] mt-[5px] mb-[3px] h-px bg-[#8c8c8c]" />
          <div className="grid h-[100px] grid-cols-[32px_30px] items-center justify-items-center">{tools2.map((t, i) => <span key={i} className="h-4 w-4">{t}</span>)}</div>
        </aside>
        <div className="flex min-w-0 flex-1 flex-col">
          <div className="flex h-[875px] justify-between">
            <div className="pt-[104px] pl-[351px]"><Board /></div>
            <div className="flex">
              <div className="mr-[3px] pt-[15px]">
                <SideTab className="mb-[28px] pt-[7px]" text="MANUFACTURING" badge={
                  <svg width="15" height="15" viewBox="0 0 15 15"><rect width="15" height="15" rx="1.500" fill="#1e8e3e" /><rect x="4.500" y="4" width="6.500" height="7" fill="#1e8e3e" stroke="#cfe8a0" strokeWidth="1.500" /><path d="M5 2.500H11M5 12.500H11" stroke="#e4d62a" strokeWidth="2" strokeDasharray="1.200 1" /></svg>
                } />
                <SideTab className="pt-[17px]" text="FUSION SYNC" badge={
                  <svg width="15" height="15" viewBox="0 0 15 15"><rect width="15" height="15" rx="1.500" fill="#f7a11e" /><path d="M4 3H11V5.500H7V7H10V9H7V12H4Z" fill="#5a5048" /></svg>
                } />
              </div>
              <div className="flex w-[17px] flex-col items-center justify-between border-l border-white bg-[#f0f0f0] py-[5px]">
                <Chev d="M1 6L4 3L7 6" />
                <Chev d="M1 2L4 5L7 2" />
              </div>
            </div>
          </div>
          <div className="flex h-[17px]">
            <div className="flex flex-1 items-center justify-between border-t border-white bg-[#f0f0f0] px-1">
              <Chev d="M6 1L3 4L6 7" />
              <Chev d="M2 1L5 4L2 7" />
            </div>
            <div className="w-[16px]" />
          </div>
        </div>
      </div>

      <footer className="flex h-[25px] items-center justify-between bg-[#e5e5e5] text-[#333]">
        <span className="pt-[2px] pl-[4px] font-['DejaVu_Sans_Condensed','Noto_Sans',sans-serif] text-[11px] tracking-[-0.16px]">Left-click&amp;drag to define group (or left-click to start defining a group polygon)</span>
        <div className="flex h-[22px] items-center">
          <span className="flex h-full w-[22px] items-center justify-center border-l border-[#cfcfcf]">
            <svg width="12" height="16" viewBox="0 0 12 16"><path d="M6.500 0L0 9H5L4 16L12 6H7Z" fill="#6fb92c" /></svg>
          </span>
          <span className="h-full w-[22px] border-l border-[#cfcfcf]" />
          <span className="flex h-full w-[22px] items-center border-l border-[#cfcfcf] pl-[5px]">{autoRoute}</span>
        </div>
      </footer>

      <Taskbar />

      <Menu items={fileMenu} className="top-[43px] left-0 h-[491px] w-[276px]" />
      <Menu items={exportMenu} className="top-[412px] left-[269px] h-[257px] w-[124px]" />
    </div>
  );
}
